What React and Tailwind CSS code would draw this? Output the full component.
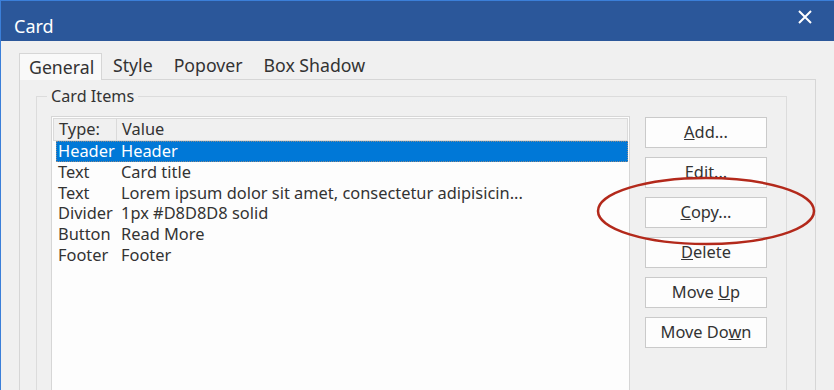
import React from "react";

const rows = [
  ["Header", "Header"],
  ["Text", "Card title"],
  ["Text", "Lorem ipsum dolor sit amet, consectetur adipisicin..."],
  ["Divider", "1px #D8D8D8 solid"],
  ["Button", "Read More"],
  ["Footer", "Footer"],
];

function Btn({ children }) {
  return (
    <div className="w-[122px] h-[31px] bg-[#fdfdfd] border border-[#cacaca] flex items-center justify-center text-[16.4px] text-[#333]">
      <span className="whitespace-pre">{children}</span>
    </div>
  );
}

export default function App() {
  return (
    <div className="w-[834px] h-[390px] overflow-hidden relative bg-[#f0f0f0] border-l border-t border-[#3b7fd9] font-['Noto_Sans',sans-serif] text-[#333]">
      {/* Title bar */}
      <div className="h-[40px] bg-[#2b579a] flex items-start justify-between pl-[13px] pr-[22px]">
        <div className="mt-[16px] text-[18px] text-white leading-none">Card</div>
        <svg width="14" height="14" viewBox="0 0 14 14" className="mt-[9px]">
          <path d="M1 1 L13 13 M13 1 L1 13" stroke="white" strokeWidth="2" />
        </svg>
      </div>

      {/* Body */}
      <div className="pl-[18px] pr-[18px] pt-[11px]">
        {/* Tabs */}
        <div className="flex items-end h-[27px] text-[17.7px]">
          <div className="h-[27px] w-[83px] bg-[#f9f9f9] border border-b-0 border-[#d6d6d6] flex items-center pl-[9px] relative top-[1px]">
            General
          </div>
          <div className="h-[27px] flex items-center pl-[11px]">Style</div>
          <div className="h-[27px] flex items-center pl-[21px]">Popover</div>
          <div className="h-[27px] flex items-center pl-[21px]">Box Shadow</div>
        </div>

        {/* Panel */}
        <div className="w-[797px] h-[340px] border border-[#d6d6d6] bg-[#f0f0f0] pl-[16px] pt-[16px]">
          {/* Group box */}
          <div className="relative w-[751px] h-[320px] border border-[#dcdcdc] pl-[14px] pt-[19px] flex">
            <div className="absolute left-[10px] top-[-11px] px-[4px] bg-[#f0f0f0] text-[16.2px] leading-[20px]">
              Card Items
            </div>

            {/* List box */}
            <div className="w-[579px] h-[300px] bg-[#fdfdfd] border border-[#d6d6d6] pt-[1px] pl-[1px] pr-[1px]">
              <div className="flex h-[23px] bg-[#f0f0f0] border border-[#dadada] text-[16.4px]">
                <div className="w-[63px] border-r border-[#dadada] pl-[5px] flex items-center">Type:</div>
                <div className="flex-1 pl-[5px] flex items-center">Value</div>
              </div>
              <div className="pl-[3px] text-[16.4px]">
                {rows.map((r, i) => (
                  <div
                    key={i}
                    className={
                      "flex h-[20.8px] items-center " +
                      (i === 0
                        ? "bg-[#0078d7] text-white outline outline-1 outline-dotted outline-[#8a8a8a] -outline-offset-1"
                        : "")
                    }
                  >
                    <div className="w-[65px] pl-[2px] whitespace-nowrap">{r[0]}</div>
                    <div className="whitespace-nowrap">{r[1]}</div>
                  </div>
                ))}
              </div>
            </div>

            {/* Buttons */}
            <div className="ml-[15px] mt-[1px] flex flex-col gap-[9px]">
              <Btn><span className="underline">A</span>dd...</Btn>
              <Btn>Edit...</Btn>
              <Btn><span className="underline">C</span>opy...</Btn>
              <Btn><span className="underline">D</span>elete</Btn>
              <Btn>Move <span className="underline">U</span>p</Btn>
              <Btn>Move Do<span className="underline">w</span>n</Btn>
            </div>
          </div>
        </div>
      </div>

      {/* Red annotation ellipse */}
      <svg className="absolute left-[594px] top-[174px]" width="222" height="72" viewBox="0 0 222 72">
        <ellipse cx="111" cy="36" rx="108" ry="33" fill="none" stroke="#b3291b" strokeWidth="2.5" />
      </svg>
    </div>
  );
}
